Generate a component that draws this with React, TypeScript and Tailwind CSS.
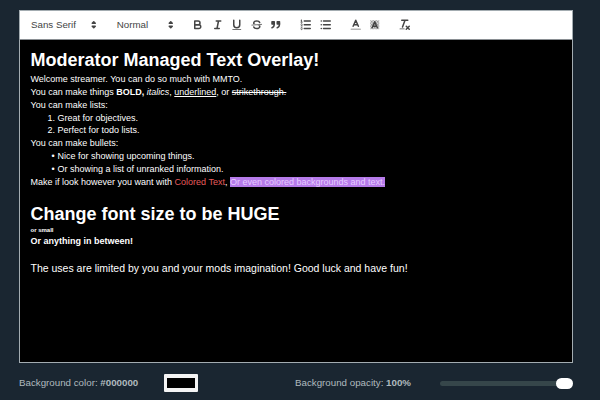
import type { ReactNode } from "react";

const F = "font-['Liberation_Sans',Arial,sans-serif]";

function Arrows() {
  return (
    <svg viewBox="0 0 18 18" className="w-[13.5px] h-[13.5px]">
      <polygon points="7 11 9 13 11 11 7 11" fill="#444" stroke="#444" strokeWidth="2" strokeLinejoin="round" />
      <polygon points="7 7 9 5 11 7 7 7" fill="#444" stroke="#444" strokeWidth="2" strokeLinejoin="round" />
    </svg>
  );
}

function Ico({ children }: { children: ReactNode }) {
  return (
    <span className="w-[19.5px] h-[18px] flex items-center justify-center shrink-0">
      <svg viewBox="0 0 18 18" className="w-[13.5px] h-[13.5px]" fill="none" stroke="#444" strokeWidth="2" strokeLinecap="round" strokeLinejoin="round">
        {children}
      </svg>
    </span>
  );
}

function Picker({ label, w }: { label: string; w: string }) {
  return (
    <div className={`${w} h-[18px] flex items-center justify-between pl-[6px] text-[#444] text-[9.75px] shrink-0`}>
      <span>{label}</span>
      <Arrows />
    </div>
  );
}

function Group({ children }: { children: ReactNode }) {
  return <div className="flex items-center ml-[10.5px]">{children}</div>;
}

export default function App() {
  return (
    <div className={`${F} w-[600px] h-[400px] bg-[#1a2631] overflow-hidden flex flex-col px-[19px] pt-[10px]`}>
      <div className="w-[554px] h-[30px] bg-white border border-[#a3acb1] border-b-[#8a8f93] flex items-center pl-[5px] shrink-0">
        <Picker label="Sans Serif" w="w-[75px]" />
        <Picker label="Normal" w="w-[67px] ml-[10.7px]" />
        <Group>
          <Ico>
            <path d="M5,4H9.5A2.5,2.5,0,0,1,12,6.5v0A2.5,2.5,0,0,1,9.5,9H5A0,0,0,0,1,5,9V4A0,0,0,0,1,5,4Z" />
            <path d="M5,9h5.5A2.5,2.5,0,0,1,13,11.5v0A2.5,2.5,0,0,1,10.5,14H5a0,0,0,0,1,0,0V9A0,0,0,0,1,5,9Z" />
          </Ico>
          <Ico>
            <path d="M7 4H13M5 14H11M8 14L10 4" />
          </Ico>
          <Ico>
            <path d="M5,3V9a4.012,4.012,0,0,0,4,4H9a4.012,4.012,0,0,0,4-4V3" />
            <rect x="3" y="15" width="12" height="1" rx="0.5" fill="#444" stroke="none" />
          </Ico>
          <Ico>
            <path d="M15.5 8.5 2.5 9.5" strokeWidth="1" />
            <path fill="#444" stroke="none" d="M9.007,8C6.542,7.791,6,7.519,6,6.5,6,5.792,7.283,5,9,5c1.571,0,2.765.679,2.969,1.309a1,1,0,0,0,1.9-.617C13.356,4.106,11.354,3,9,3,6.2,3,4,4.538,4,6.5a3.2,3.2,0,0,0,.5,1.843Z" />
            <path fill="#444" stroke="none" d="M8.984,10C11.457,10.208,12,10.479,12,11.5c0,.708-1.283,1.5-3,1.5-1.571,0-2.765-.679-2.969-1.309a1,1,0,1,0-1.9.617C4.644,13.894,6.646,15,9,15c2.8,0,5-1.538,5-3.5a3.2,3.2,0,0,0-.5-1.843Z" />
          </Ico>
          <Ico>
            <rect x="4" y="5" width="3" height="3" fill="#444" />
            <rect x="11" y="5" width="3" height="3" fill="#444" />
            <path d="M7,8c0,4.031-3,5-3,5" />
            <path d="M14,8c0,4.031-3,5-3,5" />
          </Ico>
        </Group>
        <Group>
          <Ico>
            <path d="M7 4H15M7 9H15M7 14H15" />
            <path d="M2.5 5.5H4.5" strokeWidth="1" />
            <path fill="#444" stroke="none" d="M3.5,6A0.5,0.5,0,0,1,3,5.5V3.085l-0.276.138A0.5,0.5,0,0,1,2.053,3c-0.124-.247-0.023-0.324.224-0.447l1-.5A0.5,0.5,0,0,1,4,2.5v3A0.5,0.5,0,0,1,3.5,6Z" />
            <path strokeWidth="1" d="M4.5,10.5h-2c0-.234,1.85-1.076,1.85-2.234A0.959,0.959,0,0,0,2.5,8.156" />
            <path strokeWidth="1" d="M2.5,14.846a0.959,0.959,0,0,0,1.85-.109A0.7,0.7,0,0,0,3.75,14a0.688,0.688,0,0,0,.6-0.736,0.959,0.959,0,0,0-1.85-.109" />
          </Ico>
          <Ico>
            <path d="M6 4H15M6 9H15M6 14H15M3 4H3.01M3 9H3.01M3 14H3.01" />
          </Ico>
        </Group>
        <Group>
          <Ico>
            <path d="M3 15H15" stroke="#b5b5b5" />
            <path d="M5.5 11 9 3 12.5 11M11.63 9H6.38" />
          </Ico>
          <Ico>
            <defs>
              <pattern id="dither" width="2" height="2" patternUnits="userSpaceOnUse">
                <rect width="1" height="1" fill="#777" stroke="none" />
                <rect x="1" y="1" width="1" height="1" fill="#777" stroke="none" />
              </pattern>
            </defs>
            <rect x="3" y="3" width="12" height="12" fill="url(#dither)" stroke="none" />
            <path d="M5.5 13 9 5 12.5 13M11.63 11H6.38" />
          </Ico>
        </Group>
        <Group>
          <Ico>
            <path d="M5 3H13M6 12 9.35 3M11 11 15 15M15 11 11 15" />
            <rect x="2" y="14" width="7" height="1" rx="0.5" fill="#444" stroke="none" />
          </Ico>
        </Group>
      </div>

      <div className="w-[554px] h-[323px] bg-black border border-[#a3acb1] border-t-0 text-white text-[9px] leading-[12.85px] pl-[10.5px] pr-[10px] pt-[9px] shrink-0">
        <div className="text-[18px] leading-[23px] font-bold mb-px">Moderator Managed Text Overlay!</div>
        <div>Welcome streamer. You can do so much with MMTO.</div>
        <div>You can make things <b>BOLD,</b> <i>italics</i>, <u>underlined</u>, or <s>strikethrough.</s></div>
        <div>You can make lists:</div>
        <ol>
          <li className="flex pl-[17px]"><span className="w-[10px]">1.</span><span>Great for objectives.</span></li>
          <li className="flex pl-[17px]"><span className="w-[10px]">2.</span><span>Perfect for todo lists.</span></li>
        </ol>
        <div>You can make bullets:</div>
        <ul>
          <li className="flex pl-[21px]"><span className="w-[6px]">•</span><span>Nice for showing upcoming things.</span></li>
          <li className="flex pl-[21px]"><span className="w-[6px]">•</span><span>Or showing a list of unranked information.</span></li>
        </ul>
        <div>Make if look however you want with <span className="text-[#e65c5c]">Colored Text</span>, <span className="bg-[#b67bea] text-[#e6ccff]">Or even colored backgrounds and text.</span></div>
        <div className="h-[15px]" />
        <div className="text-[18px] leading-[21px] font-bold">Change font size to be HUGE</div>
        <div className="text-[6px] leading-[7px] font-bold mt-[2px]">or small</div>
        <div className="font-bold leading-[12px] mt-px">Or anything in between!</div>
        <div className="text-[10.5px] leading-[14px] mt-[14px]">The uses are limited by you and your mods imagination! Good luck and have fun!</div>
      </div>

      <div className="w-[554px] flex items-center justify-between flex-1 pt-[3px] text-[9.75px] text-[#b0babf]">
        <div className="flex items-center">
          <span>Background color: <b>#000000</b></span>
          <div className="w-[34px] h-[18px] ml-[26px] bg-black border-x-[3px] border-y-[4px] border-[#f4f4f4] rounded-[1px]" />
        </div>
        <div className="flex items-center">
          <span>Background opacity: <b>100%</b></span>
          <div className="w-[133px] h-[5px] ml-[29px] bg-[#36464a] rounded-full relative">
            <div className="absolute right-0 top-[-3px] w-[17px] h-[11px] rounded-full bg-white" />
          </div>
        </div>
      </div>
    </div>
  );
}
